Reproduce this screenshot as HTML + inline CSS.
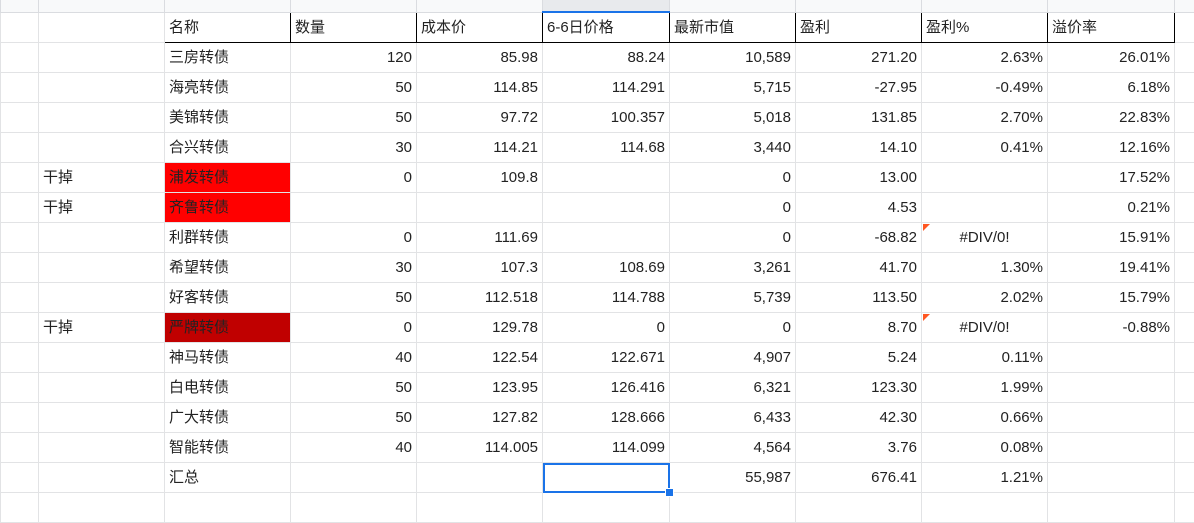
<!DOCTYPE html>
<html><head><meta charset="utf-8"><style>
html,body{margin:0;padding:0;background:#fff;width:1194px;height:516px;overflow:hidden}
table{border-collapse:collapse;table-layout:fixed;width:1204px;position:absolute;left:0;top:-1px;font-family:"Liberation Sans","Noto Sans CJK SC",sans-serif;font-size:15px;color:#222}
td{border:1px solid #e2e3e5;height:29px;padding:0 4px;white-space:nowrap;overflow:hidden;text-align:right;line-height:29px}
td.l{text-align:left}
td.c{text-align:center}
tr.top td{height:11px;background:#f8f9fa;border-color:#dadce0;line-height:11px;padding:0}
tr.top td.sel{background:#e8eaed;border-bottom:2px solid #1a73e8}
tr.h td.k{border:1.5px solid #000;text-align:left}
td.r1{background:#ff0000;text-align:left}
td.r2{background:#c00000;text-align:left}
td.tri{position:relative}
td.tri:before{content:"";position:absolute;left:1px;top:1px;border-top:7px solid #ff5722;border-right:7px solid transparent}
td.selc{outline:2px solid #1a73e8;outline-offset:-2px;position:relative;overflow:visible}
.hd{position:absolute;right:-5px;bottom:-5px;width:7px;height:7px;background:#1a73e8;border:1px solid #fff}
</style></head><body>
<table>
<colgroup><col style="width:38px"><col style="width:126px"><col style="width:126px"><col style="width:126px"><col style="width:126px"><col style="width:127px"><col style="width:126px"><col style="width:126px"><col style="width:126px"><col style="width:127px"><col style="width:30px"></colgroup>
<tr class="top"><td></td><td></td><td></td><td></td><td></td><td class="sel"></td><td></td><td></td><td></td><td></td><td></td></tr>
<tr class="h"><td></td><td></td><td class="k">名称</td><td class="k">数量</td><td class="k">成本价</td><td class="k">6-6日价格</td><td class="k">最新市值</td><td class="k">盈利</td><td class="k">盈利%</td><td class="k">溢价率</td><td></td></tr>
<tr><td></td><td></td><td class="l">三房转债</td><td>120</td><td>85.98</td><td>88.24</td><td>10,589</td><td>271.20</td><td>2.63%</td><td>26.01%</td><td></td></tr>
<tr><td></td><td></td><td class="l">海亮转债</td><td>50</td><td>114.85</td><td>114.291</td><td>5,715</td><td>-27.95</td><td>-0.49%</td><td>6.18%</td><td></td></tr>
<tr><td></td><td></td><td class="l">美锦转债</td><td>50</td><td>97.72</td><td>100.357</td><td>5,018</td><td>131.85</td><td>2.70%</td><td>22.83%</td><td></td></tr>
<tr><td></td><td></td><td class="l">合兴转债</td><td>30</td><td>114.21</td><td>114.68</td><td>3,440</td><td>14.10</td><td>0.41%</td><td>12.16%</td><td></td></tr>
<tr><td></td><td class="l">干掉</td><td class="r1">浦发转债</td><td>0</td><td>109.8</td><td></td><td>0</td><td>13.00</td><td></td><td>17.52%</td><td></td></tr>
<tr><td></td><td class="l">干掉</td><td class="r1">齐鲁转债</td><td></td><td></td><td></td><td>0</td><td>4.53</td><td></td><td>0.21%</td><td></td></tr>
<tr><td></td><td></td><td class="l">利群转债</td><td>0</td><td>111.69</td><td></td><td>0</td><td>-68.82</td><td class="c tri">#DIV/0!</td><td>15.91%</td><td></td></tr>
<tr><td></td><td></td><td class="l">希望转债</td><td>30</td><td>107.3</td><td>108.69</td><td>3,261</td><td>41.70</td><td>1.30%</td><td>19.41%</td><td></td></tr>
<tr><td></td><td></td><td class="l">好客转债</td><td>50</td><td>112.518</td><td>114.788</td><td>5,739</td><td>113.50</td><td>2.02%</td><td>15.79%</td><td></td></tr>
<tr><td></td><td class="l">干掉</td><td class="r2">严牌转债</td><td>0</td><td>129.78</td><td>0</td><td>0</td><td>8.70</td><td class="c tri">#DIV/0!</td><td>-0.88%</td><td></td></tr>
<tr><td></td><td></td><td class="l">神马转债</td><td>40</td><td>122.54</td><td>122.671</td><td>4,907</td><td>5.24</td><td>0.11%</td><td></td><td></td></tr>
<tr><td></td><td></td><td class="l">白电转债</td><td>50</td><td>123.95</td><td>126.416</td><td>6,321</td><td>123.30</td><td>1.99%</td><td></td><td></td></tr>
<tr><td></td><td></td><td class="l">广大转债</td><td>50</td><td>127.82</td><td>128.666</td><td>6,433</td><td>42.30</td><td>0.66%</td><td></td><td></td></tr>
<tr><td></td><td></td><td class="l">智能转债</td><td>40</td><td>114.005</td><td>114.099</td><td>4,564</td><td>3.76</td><td>0.08%</td><td></td><td></td></tr>
<tr><td></td><td></td><td class="l">汇总</td><td></td><td></td><td class="selc"><div class="hd"></div></td><td>55,987</td><td>676.41</td><td>1.21%</td><td></td><td></td></tr>
<tr><td></td><td></td><td></td><td></td><td></td><td></td><td></td><td></td><td></td><td></td><td></td></tr>
</table>
</body></html>
